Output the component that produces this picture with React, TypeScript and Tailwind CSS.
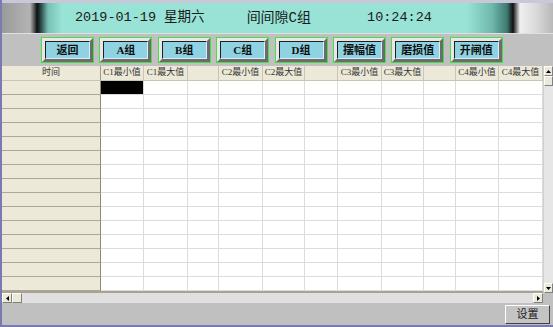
import React from "react";

const cols = [99, 43, 44, 31, 44, 42, 33, 44, 42, 32, 43, 44];
const heads = ["时间", "C1最小值", "C1最大值", "", "C2最小值", "C2最大值", "", "C3最小值", "C3最大值", "", "C4最小值", "C4最大值"];
const btns = ["返回", "A组", "B组", "C组", "D组", "摆幅值", "磨损值", "开闸值"];

const serif = { fontFamily: '"Liberation Serif", "Noto Sans CJK SC", serif' };
const mono = { fontFamily: '"Liberation Mono", "Noto Sans CJK SC", monospace' };

export default function App() {
  const rows = Array.from({ length: 15 });
  return (
    <div className="w-[553px] h-[327px] overflow-hidden bg-[#c0c0c0] flex flex-col border-l-2 border-b-2 border-[#7a7ab0] relative">
      {/* banner */}
      <div
        className="h-[33px] flex items-center text-[13.5px] text-[#1a1a1a] border-t-[3px] border-[#c8c8d8]"
        style={{
          ...mono,
          background:
            "linear-gradient(to right,#9a9a9a 0px,#b4b4b4 28px,#5a5a5a 32px,#101010 35px,#203a38 38px,#78c0b4 46px,#98e2d6 60px,#98e2d6 465px,#70b8ac 490px,#3e7a72 505px,#101010 511px,#707070 514px,#f0f0f0 518px,#d8d8d8 535px,#b8b8b8 551px)",
        }}
      >
        <span className="ml-[73px] whitespace-nowrap">2019-01-19 星期六</span>
        <span className="ml-[42px] whitespace-nowrap text-[14px]">间间隙C组</span>
        <span className="ml-[56px] whitespace-nowrap">10:24:24</span>
      </div>
      {/* buttons */}
      <div className="h-[33px] flex items-center pl-[39px] gap-[5.4px] border-t border-[#e0e0e0]">
        {btns.map((b) => (
          <div key={b} className="w-[53px] h-[26px] border border-[#44e044]">
            <div className="w-full h-full border-[3px] border-t-[#e8e8e8] border-l-[#e8e8e8] border-r-[#6c6c6c] border-b-[#6c6c6c] bg-[#a8a8a8]">
              <div
                className="w-full h-full bg-[#8fd3e2] border border-t-[#202020] border-l-[#202020] border-r-[#d8f0f5] border-b-[#d8f0f5] flex items-center justify-center text-[11px] font-bold text-[#101010] leading-none"
                style={serif}
              >
                {b}
              </div>
            </div>
          </div>
        ))}
      </div>
      {/* table + vscroll */}
      <div className="flex h-[227px]">
        <div className="flex flex-col w-[541px] bg-white">
          <div className="flex h-[15px] bg-[#ece9d8]">
            {heads.map((h, i) => (
              <div
                key={i}
                style={{ width: cols[i], ...serif }}
                className={`shrink-0 border-b border-r ${i === 0 ? "border-r-[#9a9a8a]" : "border-r-[#c8c5b4]"} border-b-[#c8c5b4] flex items-center justify-center text-[9px] text-[#333] whitespace-nowrap overflow-hidden`}
              >
                {h}
              </div>
            ))}
          </div>
          {rows.map((_, r) => (
            <div key={r} className="flex h-[14px]">
              {cols.map((w, i) => (
                <div
                  key={i}
                  style={{ width: w }}
                  className={`shrink-0 ${
                    i === 0
                      ? "bg-[#ece9d8] border-r border-b border-r-[#8a8a7a] border-b-[#aca899]"
                      : r === 0 && i === 1
                      ? "bg-black border-r border-b border-[#d8d8d8]"
                      : "bg-white border-r border-b border-[#dcdcdc]"
                  }`}
                />
              ))}
            </div>
          ))}
          <div className="h-[2px] bg-[#a8a290]" />
        </div>
        <div className="w-[10px] flex flex-col bg-[#e6e6e6] border-l border-[#d0d0d0]">
          <div className="h-[10px] bg-[#ece9d8] border border-t-white border-l-white border-r-[#808080] border-b-[#808080] flex items-center justify-center">
            <svg width="5" height="3" viewBox="0 0 5 3"><path d="M2.5 0L5 3H0z" fill="#000" /></svg>
          </div>
          <div className="h-[10px] bg-[#ece9d8] border border-t-white border-l-white border-r-[#808080] border-b-[#808080]" />
          <div className="flex-1" />
          <div className="h-[10px] bg-[#ece9d8] border border-t-white border-l-white border-r-[#808080] border-b-[#808080] flex items-center justify-center">
            <svg width="5" height="3" viewBox="0 0 5 3"><path d="M0 0H5L2.5 3z" fill="#000" /></svg>
          </div>
        </div>
      </div>
      {/* hscroll */}
      <div className="h-[10px] flex bg-[#e0e0e0] w-[541px]">
        <div className="w-[10px] h-full bg-[#ece9d8] border border-t-white border-l-white border-r-[#808080] border-b-[#808080] flex items-center justify-center">
          <svg width="3" height="5" viewBox="0 0 3 5"><path d="M0 2.5L3 0V5z" fill="#000" /></svg>
        </div>
        <div className="w-[10px] h-full bg-[#ece9d8] border border-t-white border-l-white border-r-[#808080] border-b-[#808080]" />
        <div className="flex-1" />
        <div className="w-[10px] h-full bg-[#ece9d8] border border-t-white border-l-white border-r-[#808080] border-b-[#808080] flex items-center justify-center">
          <svg width="3" height="5" viewBox="0 0 3 5"><path d="M0 0L3 2.5L0 5z" fill="#000" /></svg>
        </div>
      </div>
      {/* bottom panel */}
      <div className="flex-1 flex items-center justify-end pr-[3px]">
        <div
          className="w-[45px] h-[19px] border border-t-white border-l-white border-r-[#404040] border-b-[#404040] bg-[#c4c4c4] flex items-center justify-center text-[11px] text-[#222]"
          style={serif}
        >
          设置
        </div>
      </div>
    </div>
  );
}
